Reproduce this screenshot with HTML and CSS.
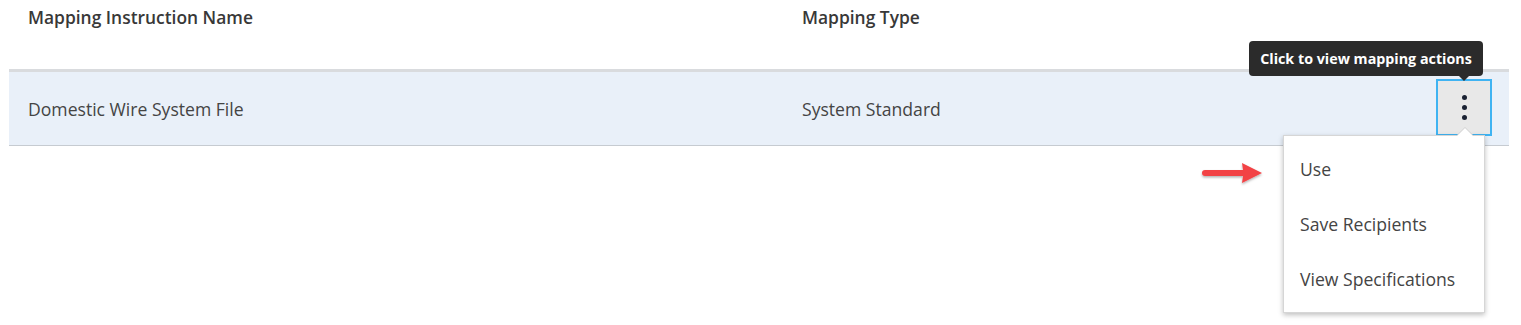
FILE: index.html
```html
<!DOCTYPE html>
<html>
<head>
<meta charset="utf-8">
<link rel="stylesheet" href="styles.css">
</head>
<body>
<div class="table">
  <div class="head">
    <div class="cell c1">Mapping Instruction Name</div>
    <div class="cell c2">Mapping Type</div>
  </div>
  <div class="row">
    <div class="cell c1">Domestic Wire System File</div>
    <div class="cell c2">System Standard</div>
    <div class="actions">
      <button class="kebab" aria-label="Actions"><span></span><span></span><span></span></button>
      <div class="tooltip">Click to view mapping actions</div>
      <div class="menu">
        <div class="item">Use</div>
        <div class="item">Save Recipients</div>
        <div class="item">View Specifications</div>
      </div>
      <svg class="arrow" width="70" height="28" viewBox="0 0 70 28">
        <defs>
          <filter id="sh" x="-20%" y="-50%" width="140%" height="200%">
            <feDropShadow dx="0" dy="1.5" stdDeviation="1.3" flood-color="#000" flood-opacity="0.3"/>
          </filter>
        </defs>
        <g filter="url(#sh)">
          <path d="M6 10 L44 10 L43 3 L63 13 L43 23 L44 16 L6 16 A3 3 0 0 1 6 10 Z" fill="#f24244"/>
        </g>
      </svg>
    </div>
  </div>
</div>
</body>
</html>
```
FILE: styles.css
```css
html, body {
  margin: 0;
  padding: 0;
  background: #fff;
  font-family: "Open Sans", "Noto Sans", sans-serif;
}
body {
  min-height: 325px;
}
.table {
  margin-left: 9px;
  width: 1500px;
}
.head {
  display: flex;
  height: 69px;
  color: #383838;
  font-size: 17.4px;
  font-weight: 600;
}
.head .cell {
  padding-top: 5px;
  line-height: 24px;
}
.cell {
  padding-left: 19px;
  box-sizing: border-box;
}
.c1 {
  width: 774px;
  flex: none;
}
.c2 {
  flex: 1;
}
.row {
  position: relative;
  display: flex;
  align-items: center;
  height: 77px;
  box-sizing: border-box;
  border-top: 3px solid #d9dbde;
  border-bottom: 1px solid #c6cbd1;
  background: #e9f0f9;
  color: #444;
  font-size: 17.6px;
}
.row .cell {
  line-height: 24px;
}
.actions {
  position: absolute;
  left: 0;
  top: 0;
  width: 100%;
  height: 100%;
}
.kebab {
  position: absolute;
  left: 1427px;
  top: 7px;
  width: 56px;
  height: 57px;
  box-sizing: border-box;
  border: 2px solid #3fb3f2;
  background: #e8e8e8;
  padding: 0;
  display: flex;
  flex-direction: column;
  align-items: center;
  justify-content: center;
  gap: 5px;
}
.kebab span {
  width: 5px;
  height: 5px;
  border-radius: 50%;
  background: #1a2233;
}
.tooltip {
  position: absolute;
  left: 1240px;
  top: -31px;
  width: 234px;
  height: 35px;
  box-sizing: border-box;
  background: #2b2b2b;
  color: #fff;
  border-radius: 4px;
  font-size: 14.3px;
  font-weight: 700;
  line-height: 35px;
  text-align: center;
}
.tooltip::after {
  content: "";
  position: absolute;
  left: 210px;
  bottom: -5px;
  border-left: 5px solid transparent;
  border-right: 5px solid transparent;
  border-top: 5px solid #2b2b2b;
}
.menu {
  position: absolute;
  left: 1274px;
  top: 63px;
  width: 202px;
  height: 178px;
  box-sizing: border-box;
  background: #fff;
  border: 1px solid #d6d6d6;
  box-shadow: 0 2px 5px rgba(0, 0, 0, 0.25);
  padding-top: 11px;
}
.menu::before {
  content: "";
  position: absolute;
  left: 172px;
  top: -9px;
  border-left: 9px solid transparent;
  border-right: 9px solid transparent;
  border-bottom: 9px solid #cfcfcf;
}
.menu::after {
  content: "";
  position: absolute;
  left: 173px;
  top: -8px;
  border-left: 8px solid transparent;
  border-right: 8px solid transparent;
  border-bottom: 8px solid #fff;
}
.item {
  height: 55px;
  line-height: 45px;
  padding-left: 16px;
  font-size: 17.6px;
  color: #444;
}
.arrow {
  position: absolute;
  left: 1190px;
  top: 88px;
}
```
